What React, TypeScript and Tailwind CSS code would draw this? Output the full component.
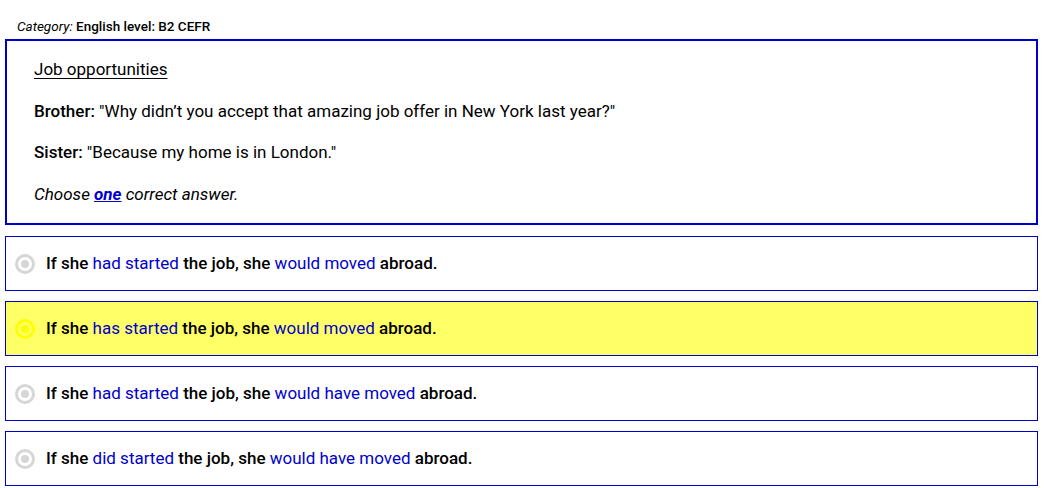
import React from "react";

type Part = { t: string; blue?: boolean };

const options: { parts: Part[]; selected?: boolean }[] = [
  { parts: [{ t: "If she " }, { t: "had started", blue: true }, { t: " the job, she " }, { t: "would moved", blue: true }, { t: " abroad." }] },
  { parts: [{ t: "If she " }, { t: "has started", blue: true }, { t: " the job, she " }, { t: "would moved", blue: true }, { t: " abroad." }], selected: true },
  { parts: [{ t: "If she " }, { t: "had started", blue: true }, { t: " the job, she " }, { t: "would have moved", blue: true }, { t: " abroad." }] },
  { parts: [{ t: "If she " }, { t: "did started", blue: true }, { t: " the job, she " }, { t: "would have moved", blue: true }, { t: " abroad." }] },
];

function Radio({ selected }: { selected?: boolean }) {
  return (
    <span
      className={`flex h-[20px] w-[20px] shrink-0 items-center justify-center rounded-full border-[3px] ${
        selected ? "border-[#ffff00] bg-[#ffff66]" : "border-[#d6d6d6] bg-white"
      }`}
    >
      <span className={`h-[8px] w-[8px] rounded-full ${selected ? "bg-[#ffff00]" : "bg-[#d6d6d6]"}`} />
    </span>
  );
}

export default function App() {
  return (
    <div className="bg-white font-['Roboto',sans-serif] text-black">
      <div className="h-[39px] pl-[17px] pt-[18px] text-[13.5px] leading-[16px]">
        <span className="italic">Category:</span> <span className="font-medium">English level: B2 CEFR</span>
      </div>
      <div className="ml-[5px] w-[1033px] border-2 border-[#0000cc] pb-[17px] pl-[27px] pr-4 pt-[16px] text-[17px] leading-[24.5px]">
        <p className="mb-[17px] underline decoration-1 underline-offset-[3px]">Job opportunities</p>
        <p className="mb-[17px]">
          <span className="font-medium">Brother:</span> "Why didn’t you accept that amazing job offer in New York last year?"
        </p>
        <p className="mb-[17px]">
          <span className="font-medium">Sister:</span> "Because my home is in London."
        </p>
        <p className="italic">
          Choose <span className="font-bold text-[#0000cc] underline">one</span> correct answer.
        </p>
      </div>
      <div className="mt-[11px] flex flex-col gap-[10px]">
        {options.map((o, i) => (
          <div
            key={i}
            className={`ml-[5px] flex h-[55px] w-[1033px] items-center gap-[11px] border border-[#0000cc] pl-[9px] text-[17px] ${
              o.selected ? "bg-[#ffff66]" : "bg-white"
            }`}
          >
            <Radio selected={o.selected} />
            <span className="font-medium">
              {o.parts.map((p, j) =>
                p.blue ? (
                  <span key={j} className="font-normal text-[#0000cc]">
                    {p.t}
                  </span>
                ) : (
                  <span key={j}>{p.t}</span>
                )
              )}
            </span>
          </div>
        ))}
      </div>
    </div>
  );
}
